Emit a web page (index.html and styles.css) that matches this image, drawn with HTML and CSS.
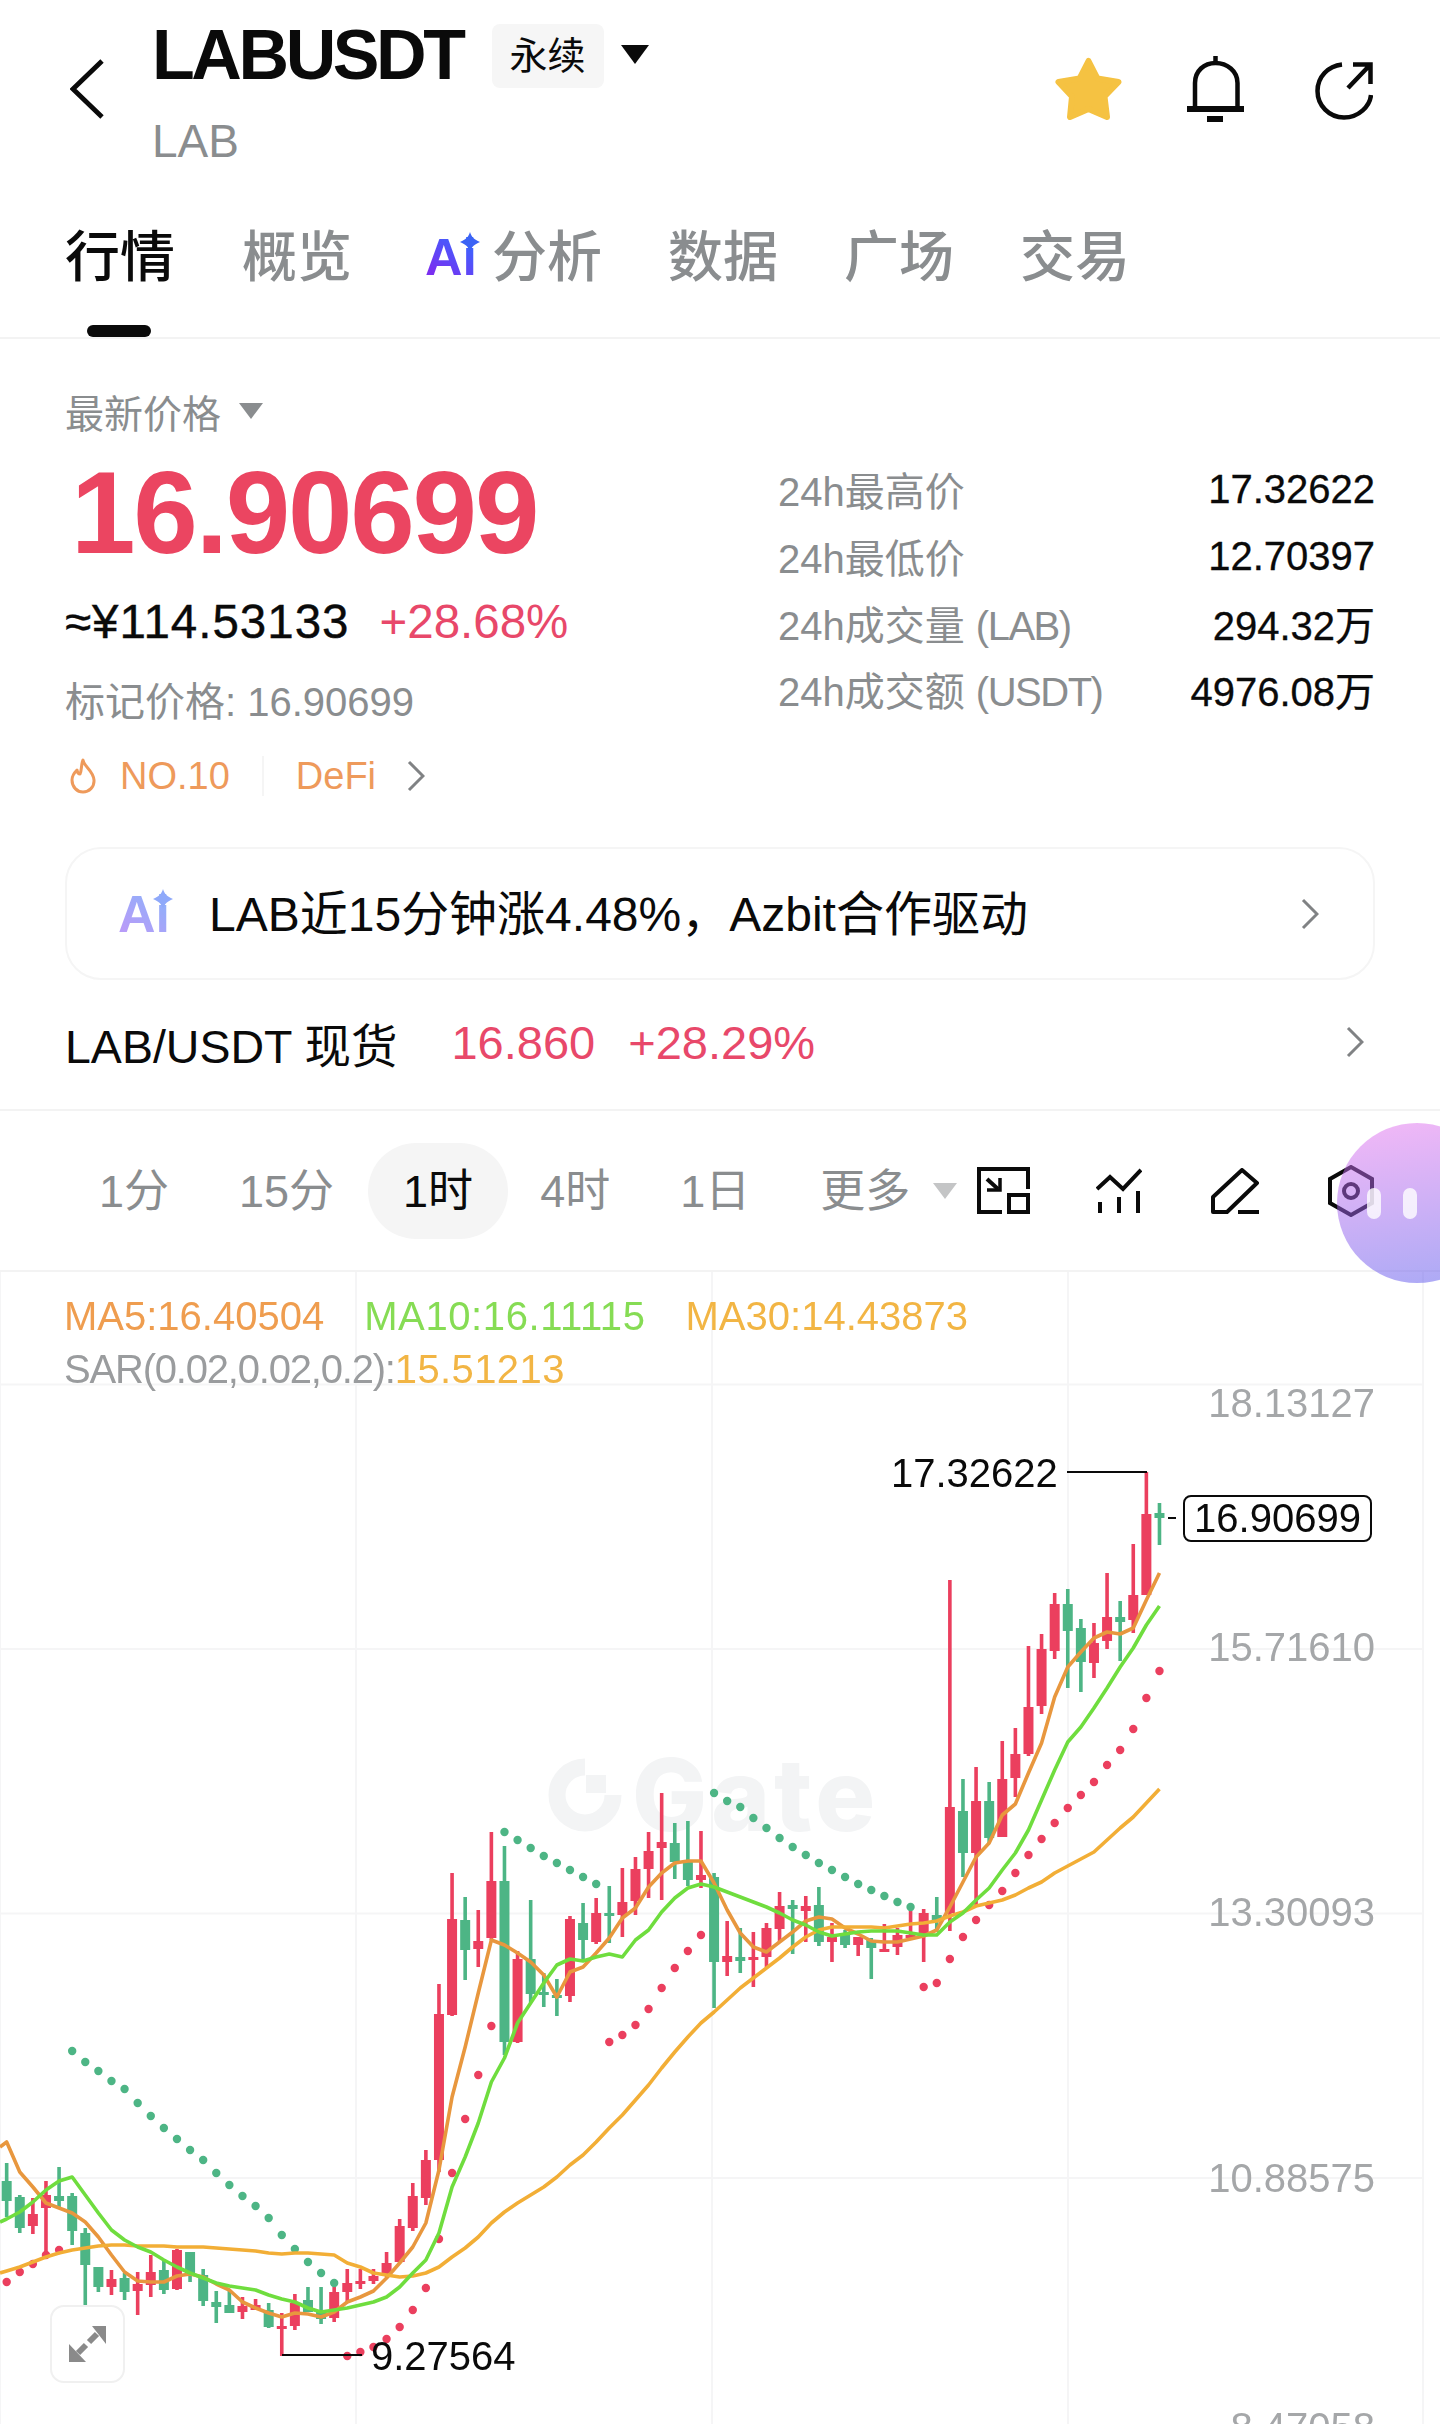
FILE: index.html
```html
<!DOCTYPE html>
<html lang="zh-CN">
<head>
  <meta charset="UTF-8" />
  <meta name="viewport" content="width=device-width, initial-scale=1" />
  <title>LABUSDT 永续</title>
  <link rel="stylesheet" href="styles.css">
</head>
<body>
  <header class="top">
    <svg class="back" viewBox="0 0 36 62" fill="none" stroke="#0a0a0a" stroke-width="5"><path d="M33 2 3 31l30 29"/></svg>
    <div class="title-block">
      <div class="title-row">
        <h1>LABUSDT</h1>
        <span class="pill">永续</span>
        <span class="tri-black"></span>
      </div>
      <div class="subtitle">LAB</div>
    </div>
    <div class="top-icons">
      <svg class="star" viewBox="0 0 67 64" fill="#f5c242" stroke="#f5c242" stroke-width="6" stroke-linejoin="round"><path d="M33.5 4 42.5 21.5 63.5 25 49.5 39.5 52 60 33.5 52 15 60 17 39.5 3.500 25 24.500 21.500Z"/></svg>
      <svg class="bell" viewBox="0 0 57 66" fill="none" stroke="#0a0a0a" stroke-width="4.500"><path d="M28.500 0v7M8 52V27C8 15 17 7 28.500 7S50.500 15 50.500 27v25"/><path d="M0 53h57" stroke-width="6"/><path d="M20 63h16" stroke-width="6"/></svg>
      <svg class="share" viewBox="0 0 58 58" fill="none" stroke="#0a0a0a" stroke-width="4.500"><path d="M27 2.500C13 4 2.500 15 2.500 29c0 14.500 11.500 26.500 26.500 26.500S55 44 56 33"/><path d="M33 26 54 4M38 2.500h17.500V22"/></svg>
    </div>
  </header>

  <nav class="tabs">
    <a class="tab active">行情</a>
    <a class="tab">概览</a>
    <a class="tab tab-ai">
      <span class="ai-mark"><span class="ai-text">Ai</span><svg class="ai-star" viewBox="0 0 20 20"><path fill="#3b63f5" d="M10 0c1.500 5 4 7.500 10 10-6 2.500-8.500 5-10 10-1.500-5-4-7.500-10-10 6-2.500 8.500-5 10-10Z"/></svg></span>
      分析
    </a>
    <a class="tab">数据</a>
    <a class="tab">广场</a>
    <a class="tab">交易</a>
  </nav>

  <section class="ticker">
    <div class="ticker-left">
      <div class="price-label">最新价格<span class="tri-gray"></span></div>
      <div class="price">16.90699</div>
      <div class="ref-line"><span class="ref">≈¥114.53133</span><span class="change">+28.68%</span></div>
      <div class="mark">标记价格: 16.90699</div>
      <div class="tags">
        <svg class="flame" viewBox="0 0 28 36" fill="none" stroke="#ee9a5b" stroke-width="3" stroke-linejoin="round"><path d="M14 2c1 7 10 10 11 20 .5 7-5 12-11 12S3 29 3 22c0-5 3-8 5-10 .5 3 2 4 3 4 2-4 1-10 3-14Z"/></svg>
        <span class="tag">NO.10</span>
        <span class="tag-sep"></span>
        <span class="tag">DeFi</span>
        <svg class="chev tag-chev" viewBox="0 0 18 32" fill="none" stroke="#808284" stroke-width="3"><path d="M2 2l14 14L2 30"/></svg>
      </div>
    </div>
    <dl class="stats">
      <div class="stat"><dt>24h最高价</dt><dd>17.32622</dd></div>
      <div class="stat"><dt>24h最低价</dt><dd>12.70397</dd></div>
      <div class="stat"><dt>24h成交量 <span class="unit">(LAB)</span></dt><dd>294.32万</dd></div>
      <div class="stat"><dt>24h成交额 <span class="unit">(USDT)</span></dt><dd>4976.08万</dd></div>
    </dl>
  </section>

  <a class="ai-card">
    <span class="ai-mark ai-mark-light"><span class="ai-text">Ai</span><svg class="ai-star" viewBox="0 0 20 20"><path fill="#8fa9fa" d="M10 0c1.500 5 4 7.500 10 10-6 2.500-8.500 5-10 10-1.500-5-4-7.500-10-10 6-2.500 8.500-5 10-10Z"/></svg></span>
    <span class="ai-card-text">LAB近15分钟涨4.48%，Azbit合作驱动</span>
    <svg class="chev card-chev" viewBox="0 0 18 32" fill="none" stroke="#808284" stroke-width="3"><path d="M2 2l14 14L2 30"/></svg>
  </a>

  <div class="spot-row">
    <span class="spot-name">LAB/USDT 现货</span>
    <span class="spot-price">16.860</span>
    <span class="spot-change">+28.29%</span>
    <svg class="chev spot-chev" viewBox="0 0 18 32" fill="none" stroke="#808284" stroke-width="3"><path d="M2 2l14 14L2 30"/></svg>
  </div>

  <div class="intervals">
    <span class="interval">1分</span>
    <span class="interval">15分</span>
    <span class="interval active">1时</span>
    <span class="interval interval-4h">4时</span>
    <span class="interval">1日</span>
    <span class="interval more">更多<span class="tri-light"></span></span>
    <div class="tools">
      <svg class="tool tool-1" viewBox="0 0 53 47" fill="none" stroke="#0a0a0a" stroke-width="4"><path d="M51 22V2H2v43h23"/><rect x="32" y="28" width="19" height="17"/><path d="M10 12l11 10" /><path d="M10 23h13V11" stroke-width="3.500"/></svg>
      <svg class="tool tool-2" viewBox="0 0 46 45" fill="none" stroke="#0a0a0a" stroke-width="4"><path d="M1 21 14 9 27 21 45 2"/><path d="M4 34v11M23 29v16M42 23v22"/></svg>
      <svg class="tool tool-3" viewBox="0 0 48 46" fill="none" stroke="#0a0a0a" stroke-width="4" stroke-linejoin="round"><path d="M31 2 46 15 16 44H2V29Z"/><path d="M27 44h21"/></svg>
      <svg class="tool tool-4" viewBox="0 0 46 52" fill="none" stroke="#0a0a0a" stroke-width="4"><path d="M23 2 44 14v24L23 50 2 38V14Z"/><circle cx="23" cy="26" r="7"/></svg>
    </div>
  </div>

  <section class="chart">
    <div class="watermark">
      <svg class="watermark-icon" viewBox="0 0 76 74"><path fill="none" stroke="#f3f4f5" stroke-width="17" d="M38 9a28 28 0 1 0 28 28"/><rect x="39" y="17" width="20" height="18" fill="#f3f4f5"/></svg>
      <span class="watermark-text">Gate</span>
    </div>
    <canvas id="kline"></canvas>
    <div class="legend">
      <div class="legend-row">
        <span class="ma5">MA5:16.40504</span>
        <span class="ma10">MA10:16.11115</span>
        <span class="ma30">MA30:14.43873</span>
      </div>
      <div class="legend-row"><span class="sar">SAR(0.02,0.02,0.2):</span><span class="ma30 sar-value">15.51213</span></div>
    </div>
    <span class="axis axis-1">18.13127</span>
    <span class="axis axis-2">15.71610</span>
    <span class="axis axis-3">13.30093</span>
    <span class="axis axis-4">10.88575</span>
    <span class="axis axis-5">8.47058</span>
    <span class="high-label">17.32622</span>
    <span class="low-label">9.27564</span>
    <span class="last-price">16.90699</span>
    <div class="expand">
      <svg viewBox="0 0 37 36" fill="#8a8a8a"><path d="M23 0h14v18ZM0 18l17 18H0Z"/><path d="M20 16l8-8M9 27l8-8" stroke="#8a8a8a" stroke-width="6"/></svg>
    </div>
  </section>

  <div class="float-ball"><span></span><span></span></div>

  <script src="chart.js"></script>
</body>
</html>
```

FILE: styles.css
```css
* {
  box-sizing: border-box;
}

html, body {
  margin: 0;
  padding: 0;
}

body {
  position: relative;
  width: 1440px;
  height: 2424px;
  overflow: hidden;
  background: #fff;
  color: #0a0a0a;
  font-family: "Liberation Sans", "Noto Sans CJK SC", sans-serif;
}

/* cabecera */
.top {
  display: flex;
  align-items: flex-start;
  height: 171px;
  padding: 13px 67px 0 70px;
}

.back {
  width: 35px;
  height: 60px;
  margin-top: 46px;
  margin-right: 47px;
}

.title-row {
  display: flex;
  align-items: center;
  height: 80px;
  margin-top: 3px;
}

.title-row h1 {
  margin: -2px 0 0;
  font-size: 70px;
  line-height: 80px;
  font-weight: 700;
  letter-spacing: -3.4px;
}

.pill {
  margin-left: 29px;
  width: 112px;
  height: 64px;
  border-radius: 8px;
  background: #f6f6f6;
  font-size: 38px;
  line-height: 64px;
  text-align: center;
}

.tri-black {
  margin-left: 17px;
  margin-top: -4px;
  border-left: 14px solid transparent;
  border-right: 14px solid transparent;
  border-top: 19px solid #0a0a0a;
}

.subtitle {
  margin-top: 15px;
  font-size: 46px;
  line-height: 60px;
  color: #8a8d8f;
}

.top-icons {
  display: flex;
  align-items: flex-start;
  margin-left: auto;
}

.star {
  width: 67px;
  height: 64px;
  margin-top: 44px;
}

.bell {
  width: 57px;
  height: 66px;
  margin-top: 43px;
  margin-left: 65px;
}

.share {
  width: 58px;
  height: 58px;
  margin-top: 49px;
  margin-left: 71px;
}

/* pestañas */
.tabs {
  display: flex;
  gap: 66px;
  height: 168px;
  padding: 51px 0 0 65px;
  border-bottom: 2px solid #f3f3f3;
}

.tab {
  position: relative;
  display: flex;
  align-items: center;
  height: 70px;
  font-size: 55px;
  line-height: 70px;
  font-weight: 500;
  color: #8a8d8f;
}

.tab.active {
  color: #0a0a0a;
}

.tab.active::after {
  content: "";
  position: absolute;
  left: 22px;
  top: 103px;
  width: 64px;
  height: 12px;
  border-radius: 6px;
  background: #0a0a0a;
}

.tab:nth-child(2) {
  margin-left: 1px;
}

.tab-ai {
  margin-left: 7px;
}

.ai-mark {
  position: relative;
  display: inline-block;
  width: 55px;
  margin-right: 12px;
  font-size: 52px;
  line-height: 60px;
  font-weight: 700;
}

.ai-text {
  background: linear-gradient(35deg, #7a2ff0 20%, #3a66ff 80%);
  -webkit-background-clip: text;
  background-clip: text;
  color: transparent;
}

.ai-star {
  position: absolute;
  right: 0;
  top: 5px;
  width: 20px;
  height: 20px;
}

.ai-mark-light .ai-text {
  background-image: linear-gradient(35deg, #b79cf8 20%, #8fb0fa 80%);
}

/* precio */
.ticker {
  display: flex;
  height: 508px;
  padding: 42px 65px 0;
}

.ticker-left {
  width: 713px;
}

.price-label {
  display: flex;
  align-items: center;
  height: 60px;
  font-size: 39px;
  color: #8a8d8f;
}

.tri-gray {
  margin-left: 18px;
  border-left: 12px solid transparent;
  border-right: 12px solid transparent;
  border-top: 16px solid #8a8d8f;
}

.price {
  margin: 7px 0 0 6px;
  font-size: 116px;
  line-height: 130px;
  font-weight: 700;
  letter-spacing: -2.2px;
  color: #eb4561;
}

.ref-line {
  display: flex;
  gap: 30px;
  margin-top: 14px;
  font-size: 47.500px;
  line-height: 60px;
}

.ref {
  letter-spacing: 1px;
  -webkit-text-stroke: 0.4px #0a0a0a;
  color: #0a0a0a;
}

.change {
  color: #e8486a;
}

.mark {
  margin-top: 20px;
  font-size: 40px;
  line-height: 60px;
  color: #8a8d8f;
}

.tags {
  display: flex;
  align-items: center;
  height: 60px;
  margin-top: 14px;
  font-size: 38px;
  color: #ee9a5b;
}

.flame {
  width: 28px;
  height: 36px;
  margin-left: 4px;
}

.tag:first-of-type {
  margin-left: 23px;
}

.tag-sep {
  width: 2px;
  height: 40px;
  margin: 0 32px;
  background: #f5f5f5;
}

.chev {
  flex: none;
  width: 18px;
  height: 32px;
}

.tag-chev {
  margin-left: 31px;
}

.stats {
  flex: 1;
  margin: 75px 0 0;
}

.stat {
  display: flex;
  justify-content: space-between;
  align-items: center;
  height: 66.700px;
  font-size: 40px;
}

.stat dt {
  color: #8a8d8f;
}

.stat dd {
  margin: 0;
  -webkit-text-stroke: 0.3px #0a0a0a;
  color: #0a0a0a;
}

.unit {
  letter-spacing: -1.5px;
}

/* resumen AI */
.ai-card {
  display: flex;
  align-items: center;
  height: 133px;
  margin: 0 65px 0 65px;
  padding: 0 54px 0 51px;
  border: 2px solid #f5f5f5;
  border-radius: 36px;
}

.ai-card .ai-mark {
  margin-right: 36px;
}

.ai-card-text {
  padding-bottom: 7px;
  font-size: 48px;
}

.card-chev {
  margin-left: auto;
}

.spot-row {
  display: flex;
  align-items: center;
  height: 129px;
  padding: 0 65px 5px;
  font-size: 46.500px;
}

.spot-price {
  margin-left: 54px;
  font-size: 47px;
  color: #e8486a;
}

.spot-change {
  margin-left: 33px;
  font-size: 47px;
  color: #e8486a;
}

.spot-chev {
  margin-left: auto;
  margin-right: 11px;
}

/* intervalos */
.intervals {
  display: flex;
  align-items: center;
  height: 163px;
  padding-left: 64px;
  border-top: 2px solid #f3f3f3;
  border-bottom: 2px solid #f3f3f3;
  font-size: 45px;
  color: #8a8d8f;
}

.interval {
  display: flex;
  align-items: center;
  height: 96px;
  padding: 0 35px 6px;
  border-radius: 48px;
}

.interval.active {
  margin-left: -1px;
  background: #f5f5f5;
  color: #0a0a0a;
}

.interval-4h {
  margin-left: -3px;
}

.interval.more {
  padding-right: 0;
}

.tri-light {
  margin-left: 23px;
  margin-top: 6px;
  border-left: 12px solid transparent;
  border-right: 12px solid transparent;
  border-top: 16px solid #c4c5c6;
}

.tools {
  display: flex;
  align-items: center;
  margin-left: 20px;
}

.tool {
  flex: none;
}

.tool-1 {
  width: 53px;
  height: 47px;
}

.tool-2 {
  width: 46px;
  height: 45px;
  margin-left: 66px;
}

.tool-3 {
  width: 48px;
  height: 46px;
  margin-left: 69px;
}

.tool-4 {
  width: 46px;
  height: 52px;
  margin-left: 69px;
}

/* grafico */
.chart {
  position: relative;
  height: 1152px;
  overflow: hidden;
}

#kline {
  position: absolute;
  left: 0;
  top: 0;
  width: 1440px;
  height: 1152px;
}

.watermark {
  position: absolute;
  left: 547px;
  top: 486px;
  display: flex;
  align-items: center;
  gap: 9px;
  height: 74px;
}

.watermark-icon {
  width: 76px;
  height: 74px;
}

.watermark-text {
  font-family: "Inter", "Liberation Sans", sans-serif;
  font-size: 100px;
  line-height: 74px;
  font-weight: 800;
  letter-spacing: 4px;
  color: #f3f4f5;
}

.legend {
  position: relative;
  display: flex;
  flex-direction: column;
  gap: 13px;
  padding: 24px 0 0 64px;
  font-size: 40px;
  line-height: 40px;
}

.legend-row {
  display: flex;
  gap: 40px;
}

.legend-row + .legend-row {
  gap: 0;
}

.ma5 {
  color: #ef9d4f;
}

.ma10 {
  letter-spacing: 0.6px;
  color: #86dc54;
}

.ma30 {
  color: #f2b544;
}

.sar {
  letter-spacing: -1.200px;
  color: #9a9c9e;
}

.sar-value {
  letter-spacing: 0.4px;
}

.axis {
  position: absolute;
  right: 65px;
  font-size: 40px;
  line-height: 40px;
  color: #a5a7a9;
}

.axis-1 { top: 111px; }
.axis-2 { top: 355px; }
.axis-3 { top: 620px; }
.axis-4 { top: 886px; }
.axis-5 { top: 1135px; }

.high-label,
.low-label {
  position: absolute;
  font-size: 40px;
  line-height: 40px;
  color: #0a0a0a;
}

.high-label {
  left: 891px;
  top: 181px;
}

.low-label {
  left: 371px;
  top: 1064px;
}

.last-price {
  position: absolute;
  left: 1183px;
  top: 223px;
  width: 189px;
  height: 47px;
  border: 2px solid #0a0a0a;
  border-radius: 8px;
  background: #fff;
  font-size: 40px;
  line-height: 43px;
  text-align: center;
}

.expand {
  position: absolute;
  left: 50px;
  top: 1033px;
  display: flex;
  align-items: center;
  justify-content: center;
  width: 75px;
  height: 78px;
  border: 2px solid #f0f0f0;
  border-radius: 14px;
  background: #fff;
}

.expand svg {
  width: 37px;
  height: 36px;
}

.float-ball {
  position: absolute;
  left: 1337px;
  top: 1123px;
  display: flex;
  align-items: center;
  justify-content: center;
  gap: 22px;
  width: 160px;
  height: 160px;
  padding-right: 50px;
  border-radius: 80px;
  background: linear-gradient(170deg, rgba(232, 114, 238, 0.5) 0%, rgba(84, 84, 236, 0.5) 100%);
}

.float-ball span {
  width: 14px;
  height: 31px;
  border-radius: 7px;
  background: rgba(255, 255, 255, 0.8);
}
```

FILE: chart.js
```js
const canvas = document.getElementById('kline');
const ctx = canvas.getContext('2d');
canvas.width = 1440;
canvas.height = 1152;

// las y son de pagina, se corrigen con el top del canvas
const top0 = canvas.getBoundingClientRect().top;
ctx.translate(0, -top0);

const RED = '#eb3f5e';
const GREEN = '#4db585';
const xOf = k => 6.67 + 13.1 * k;

// [color, cuerpo arriba, cuerpo abajo, max, min]
const candles = [
  ['g',2181,2201,2163,2217],['g',2197,2228,2195,2233],['r',2214,2226,2198,2234],['r',2195,2208,2181,2252],
  ['g',2196,2201,2167,2207],['g',2196,2231,2193,2245],['g',2233,2265,2228,2310],['g',2267,2287,2267,2292],
  ['r',2279,2287,2270,2295],['g',2278,2292,2273,2300],['r',2284,2291,2272,2315],['r',2272,2285,2255,2297],
  ['g',2270,2290,2260,2294],['r',2250,2289,2249,2290],['g',2252,2273,2252,2282],['g',2275,2301,2269,2306],
  ['g',2302,2307,2291,2323],['g',2305,2313,2290,2313],['r',2306,2312,2297,2319],['r',2305,2310,2299,2310],
  ['g',2310,2327,2303,2328],['r',2326,2327,2313,2356],['r',2303,2326,2294,2330],['g',2300,2312,2287,2312],
  ['g',2310,2319,2287,2324],['r',2292,2318,2287,2322],['r',2283,2292,2269,2303],['r',2281,2282,2269,2289],
  ['r',2276,2281,2269,2284],['r',2263,2273,2252,2277],['r',2226,2262,2219,2263],['r',2196,2228,2183,2231],
  ['r',2160,2198,2150,2205],['r',2014,2160,1984,2172],['r',1919,2015,1873,2016],['g',1920,1950,1897,1980],
  ['r',1941,1949,1910,1967],['r',1881,1938,1832,1940],['g',1881,2042,1846,2055],['r',1959,2042,1951,2043],
  ['g',1959,1994,1900,2003],['g',1992,1994,1973,2007],['g',1995,1997,1979,2016],['r',1919,1996,1916,2002],
  ['g',1923,1940,1903,1960],['r',1913,1942,1898,1944],['g',1913,1915,1886,1943],['r',1902,1915,1868,1937],
  ['r',1869,1901,1857,1915],['r',1851,1869,1832,1898],['r',1842,1848,1793,1900],['g',1843,1862,1823,1879],
  ['g',1860,1880,1821,1886],['r',1875,1880,1831,1888],['g',1877,1962,1873,2008],['r',1956,1962,1921,1976],
  ['g',1957,1961,1928,1973],['r',1957,1960,1932,1987],['r',1928,1957,1923,1967],['r',1906,1929,1892,1942],
  ['g',1905,1909,1900,1954],['r',1906,1911,1896,1942],['g',1905,1942,1887,1946],['r',1937,1942,1923,1962],
  ['g',1935,1945,1930,1948],['r',1937,1945,1937,1956],['g',1940,1948,1938,1979],['r',1949,1950,1924,1952],
  ['r',1935,1947,1928,1955],['r',1935,1937,1911,1937],['r',1913,1933,1909,1962],['g',1915,1920,1897,1932],
  ['r',1807,1913,1580,1931],['g',1811,1853,1779,1877],['r',1801,1853,1767,1905],['g',1801,1838,1782,1843],
  ['r',1779,1837,1741,1837],['r',1754,1778,1728,1797],['r',1707,1754,1646,1756],['r',1649,1706,1634,1714],
  ['r',1604,1651,1593,1659],['g',1604,1631,1589,1688],['g',1628,1662,1619,1692],['r',1643,1663,1623,1678],
  ['r',1617,1641,1573,1649],['g',1617,1622,1601,1661],['r',1595,1620,1544,1633],['r',1514,1595,1472,1595],
  ['g',1513,1518,1503,1545]
];

// tramos del SAR: [k inicial, color, valores]
const sar = [
  [0, 'r', [2282,2272,2264,2255,2250]],
  [5, 'g', [2051,2062,2071,2081,2089,2103,2116,2128,2139,2150,2160,2173,2185,2196,2206,2218,2235,2249,2262,2273,2283]],
  [26, 'r', [2356,2352,2347,2339,2327,2310,2288,2239,2173,2119,2075,2026]],
  [38, 'g', [1832,1840,1848,1856,1863,1870,1877,1884]],
  [46, 'r', [2042,2035,2025,2009,1988,1968,1951,1935]],
  [54, 'g', [1793,1801,1807,1818,1828,1838,1847,1855,1863,1870,1877,1884,1890,1896,1902,1907]],
  [70, 'r', [1987,1983,1959,1937,1920,1905,1891,1873,1855,1839,1823,1808,1795,1782,1765,1750,1729,1698,1671]]
];

const ma5 = [
  2142,2172,2187,2203,2208,2213,2222,2237,2255,2272,2281,2282,2282,2276,2274,2277,2284,2290,2302,2308,
  2313,2317,2313,2314,2317,2312,2302,2297,2291,2278,2263,2247,2223,2170,2097,2047,1993,1940,1945,1953,
  1962,1975,1997,1972,1967,1953,1938,1918,1908,1887,1873,1863,1861,1861,1883,1910,1933,1947,1952,1942,
  1932,1921,1917,1919,1928,1934,1941,1942,1942,1939,1936,1930,1907,1882,1857,1843,1815,1804,1773,1743,
  1697,1667,1652,1638,1632,1634,1628,1600,1573
];
const ma10 = [
  2219,2212,2202,2190,2181,2177,2195,2213,2230,2240,2247,2252,2260,2267,2273,2278,2283,2286,2288,2290,
  2295,2299,2302,2308,2312,2310,2308,2305,2302,2297,2287,2273,2260,2233,2187,2157,2123,2082,2058,2023,
  2003,1983,1965,1959,1961,1957,1954,1957,1940,1930,1912,1898,1888,1884,1887,1892,1897,1902,1907,1913,
  1920,1925,1932,1936,1934,1932,1931,1931,1931,1933,1935,1935,1922,1913,1900,1888,1870,1853,1830,1800,
  1770,1742,1727,1708,1688,1667,1648,1625,1606
];
const ma30 = [
  2271,2267,2262,2257,2253,2250,2248,2246,2245,2245,2246,2246,2246,2247,2247,2247,2248,2249,2250,2251,
  2253,2254,2253,2253,2254,2255,2263,2267,2273,2275,2277,2276,2273,2267,2257,2248,2237,2223,2212,2203,
  2195,2187,2177,2165,2155,2142,2128,2115,2100,2085,2068,2052,2037,2023,2012,2000,1988,1978,1968,1958,
  1947,1937,1930,1927,1927,1927,1927,1928,1926,1924,1923,1921,1916,1912,1906,1903,1900,1895,1888,1882,
  1873,1866,1859,1852,1840,1828,1817,1803,1789
];

function drawGrid() {
  ctx.strokeStyle = '#f5f5f6';
  ctx.lineWidth = 2;
  ctx.beginPath();
  [0, 356, 712, 1068, 1423].forEach(x => {
    ctx.moveTo(x, top0);
    ctx.lineTo(x, 2424);
  });
  [1384.5, 1649, 1913.5, 2178].forEach(y => {
    ctx.moveTo(0, y);
    ctx.lineTo(1423, y);
  });
  ctx.stroke();
}

function drawCandles() {
  candles.forEach((c, k) => {
    const x = xOf(k);
    ctx.fillStyle = c[0] === 'r' ? RED : GREEN;
    ctx.fillRect(x - 1.8, c[3], 3.6, c[4] - c[3]);
    ctx.fillRect(x - 5, c[1], 10, Math.max(c[2] - c[1], 3));
  });
}

function drawSar() {
  sar.forEach(([start, color, values]) => {
    ctx.fillStyle = color === 'r' ? RED : GREEN;
    values.forEach((y, i) => {
      ctx.beginPath();
      ctx.arc(xOf(start + i), y, 4.2, 0, Math.PI * 2);
      ctx.fill();
    });
  });
}

function drawLine(values, color, startY) {
  ctx.strokeStyle = color;
  ctx.lineWidth = 3.6;
  ctx.lineJoin = 'round';
  ctx.beginPath();
  ctx.moveTo(0, startY);
  values.forEach((y, k) => ctx.lineTo(xOf(k), y));
  ctx.stroke();
}

function drawMarkers() {
  ctx.strokeStyle = '#0a0a0a';
  ctx.lineWidth = 2;
  ctx.beginPath();
  ctx.moveTo(1067, 1472);
  ctx.lineTo(1147, 1472);
  ctx.moveTo(282, 2355);
  ctx.lineTo(362, 2355);
  ctx.moveTo(1168, 1518);
  ctx.lineTo(1176, 1518);
  ctx.stroke();
}

drawGrid();
drawCandles();
drawSar();
drawLine(ma5, '#e8973e', 2147);
drawLine(ma30, '#f2ae36', 2273);
drawLine(ma10, '#6fdd3e', 2222);
drawMarkers();
```
